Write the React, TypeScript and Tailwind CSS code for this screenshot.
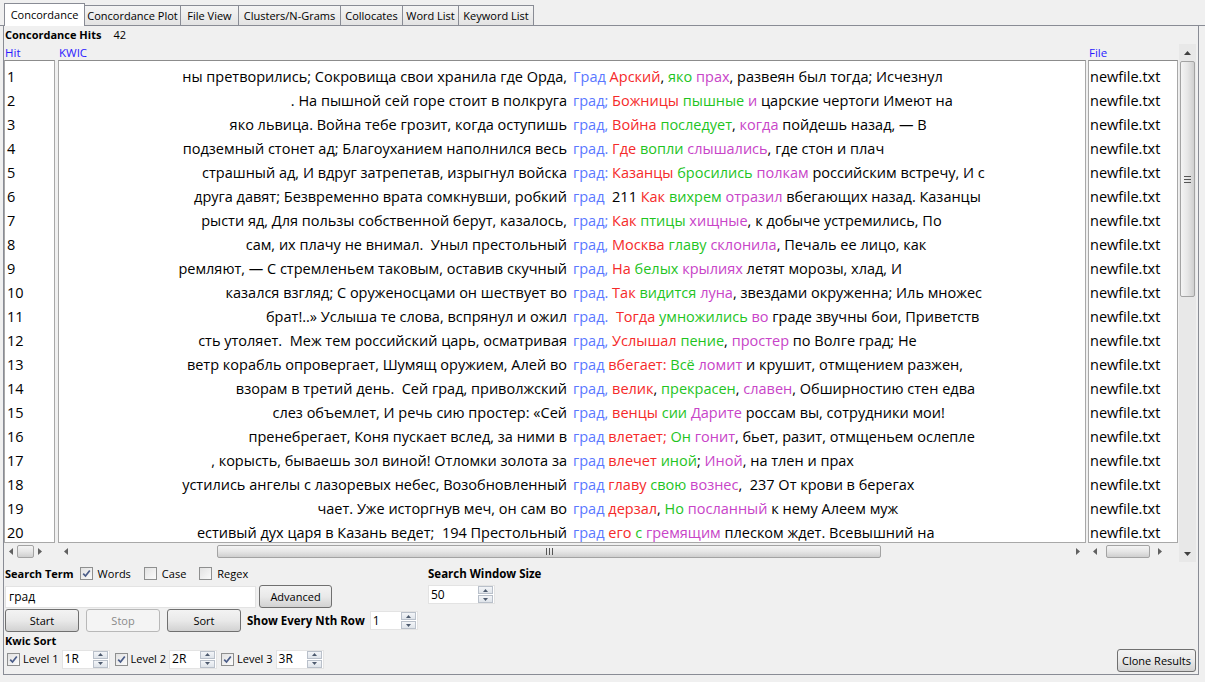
import React from "react";

type Row = { left: string; key: string; right: string };

const rows: Row[] = [
  { left: "ны претворились; Сокровища свои хранила где Орда,", key: "Град", right: " {r:Арский}, {g:яко} {m:прах}, развеян был тогда; Исчезнул" },
  { left: ". На пышной сей горе стоит в полкруга", key: "град;", right: " {r:Божницы} {g:пышные} {m:и} царские чертоги Имеют на" },
  { left: "яко львица. Война тебе грозит, когда оступишь", key: "град,", right: " {r:Война} {g:последует}, {m:когда} пойдешь назад, — В" },
  { left: "подземный стонет ад; Благоуханием наполнился весь", key: "град.", right: " {r:Где} {g:вопли} {m:слышались}, где стон и плач" },
  { left: "страшный ад, И вдруг затрепетав, изрыгнул войска", key: "град:", right: " {r:Казанцы} {g:бросились} {m:полкам} российским встречу, И с" },
  { left: "друга давят; Безвременно врата сомкнувши, робкий", key: "град", right: "  211 {r:Как} {g:вихрем} {m:отразил} вбегающих назад. Казанцы" },
  { left: "рысти яд, Для пользы собственной берут, казалось,", key: "град;", right: " {r:Как} {g:птицы} {m:хищные}, к добыче устремились, По" },
  { left: "сам, их плачу не внимал.  Уныл престольный", key: "град,", right: " {r:Москва} {g:главу} {m:склонила}, Печаль ее лицо, как" },
  { left: "ремляют, — С стремленьем таковым, оставив скучный", key: "град,", right: " {r:На} {g:белых} {m:крылиях} летят морозы, хлад, И" },
  { left: "казался взгляд; С оруженосцами он шествует во", key: "град.", right: " {r:Так} {g:видится} {m:луна}, звездами окруженна; Иль множес" },
  { left: "брат!..» Услыша те слова, вспрянул и ожил", key: "град.", right: "  {r:Тогда} {g:умножились} {m:во} граде звучны бои, Приветств" },
  { left: "сть утоляет.  Меж тем российский царь, осматривая", key: "град,", right: " {r:Услышал} {g:пение}, {m:простер} по Волге град; Не" },
  { left: "ветр корабль опровергает, Шумящ оружием, Алей во", key: "град", right: " {r:вбегает:} {g:Всё} {m:ломит} и крушит, отмщением разжен," },
  { left: "взорам в третий день.  Сей град, приволжский", key: "град,", right: " {r:велик}, {g:прекрасен}, {m:славен}, Обширностию стен едва" },
  { left: "слез объемлет, И речь сию простер: «Сей", key: "град,", right: " {r:венцы} {g:сии} {m:Дарите} россам вы, сотрудники мои!" },
  { left: "пренебрегает, Коня пускает вслед, за ними в", key: "град", right: " {r:влетает;} {g:Он} {m:гонит}, бьет, разит, отмщеньем ослепле" },
  { left: ", корысть, бываешь зол виной! Отломки золота за", key: "град", right: " {r:влечет} {g:иной}; {m:Иной}, на тлен и прах" },
  { left: "устились ангелы с лазоревых небес, Возобновленный", key: "град", right: " {r:главу} {g:свою} {m:вознес},  237 От крови в берегах" },
  { left: "чает. Уже исторгнув меч, он сам во", key: "град", right: " {r:дерзал}, {g:Но} {m:посланный} к нему Алеем муж" },
  { left: "естивый дух царя в Казань ведет;  194 Престольный", key: "град", right: " {r:его} {g:с} {m:гремящим} плеском ждет. Всевышний на" },
];

const colorClass: Record<string, string> = {
  r: "text-[#f52a2a]",
  g: "text-[#1fc41f]",
  m: "text-[#c844c8]",
};

function Rich({ text }: { text: string }) {
  const parts: React.ReactNode[] = [];
  const re = /\{(r|g|m):([^}]*)\}/g;
  let last = 0;
  let m: RegExpExecArray | null;
  let i = 0;
  while ((m = re.exec(text))) {
    if (m.index > last) parts.push(<span key={i++}>{text.slice(last, m.index)}</span>);
    parts.push(
      <span key={i++} className={colorClass[m[1]]}>
        {m[2]}
      </span>
    );
    last = m.index + m[0].length;
  }
  if (last < text.length) parts.push(<span key={i++}>{text.slice(last)}</span>);
  return <>{parts}</>;
}

const tabs = [
  { label: "Concordance", w: "w-[81px]", active: true },
  { label: "Concordance Plot", w: "w-[97px]" },
  { label: "File View", w: "w-[59px]" },
  { label: "Clusters/N-Grams", w: "w-[103px]" },
  { label: "Collocates", w: "w-[63px]" },
  { label: "Word List", w: "w-[57px]" },
  { label: "Keyword List", w: "w-[76px]" },
];

function Check({ checked = true }: { checked?: boolean }) {
  return (
    <span className="w-[13px] h-[13px] border border-[#8e8f8f] bg-gradient-to-br from-[#e2e2e2] to-[#fbfbfb] flex items-center justify-center shrink-0">
      {checked && (
        <svg width="9" height="9" viewBox="0 0 9 9">
          <path d="M1.2 4.6 L3.5 7 L7.8 1.4" stroke="#4a5c88" strokeWidth="1.7" fill="none" />
        </svg>
      )}
    </span>
  );
}

function SpinBtns() {
  return (
    <span className="flex flex-col gap-[1px] mr-[1px]">
      <span className="w-[15px] h-[8px] border border-[#b9c0ca] bg-gradient-to-b from-[#f3f5f8] to-[#dfe4ea] flex items-center justify-center">
        <svg width="5" height="3" viewBox="0 0 5 3"><path d="M0 3 L2.5 0 L5 3 Z" fill="#4d5a6e" /></svg>
      </span>
      <span className="w-[15px] h-[8px] border border-[#b9c0ca] bg-gradient-to-b from-[#f3f5f8] to-[#dfe4ea] flex items-center justify-center">
        <svg width="5" height="3" viewBox="0 0 5 3"><path d="M0 0 L2.5 3 L5 0 Z" fill="#4d5a6e" /></svg>
      </span>
    </span>
  );
}

function Btn({ children, w, disabled = false }: { children: React.ReactNode; w: string; disabled?: boolean }) {
  return (
    <span
      className={
        disabled
          ? `${w} h-[23px] border border-[#b8b8b8] rounded-[3px] bg-[#f4f4f4] text-[#8a8a8a] flex items-center justify-center`
          : `${w} h-[23px] border border-[#707070] rounded-[3px] bg-gradient-to-b from-[#f3f3f3] via-[#e9e9e9] to-[#d2d2d2] text-black flex items-center justify-center`
      }
    >
      {children}
    </span>
  );
}

function ArrowL() {
  return <svg width="4" height="7" viewBox="0 0 4 7"><path d="M4 0 L0 3.5 L4 7 Z" fill="#606060" /></svg>;
}
function ArrowR() {
  return <svg width="4" height="7" viewBox="0 0 4 7"><path d="M0 0 L4 3.5 L0 7 Z" fill="#606060" /></svg>;
}

function HThumb({ w }: { w: string }) {
  return (
    <span className={`${w} h-[13px] border border-[#a3a3a3] rounded-[2px] bg-gradient-to-b from-[#f4f4f4] via-[#e6e6e6] to-[#cfcfcf] shrink-0 flex items-center justify-center`} />
  );
}

export default function App() {
  return (
    <div className="w-[1205px] h-[682px] bg-[#f0f0f0] overflow-hidden font-['Open_Sans',sans-serif] text-[11px] text-black leading-[16px]">
      {/* Tabs */}
      <div className="h-[26px] flex items-end pl-[4px] border-b border-[#898c95]">
        {tabs.map((t) =>
          t.active ? (
            <div key={t.label} className={`${t.w} h-[23px] -mb-px bg-white border border-b-0 border-[#898c95] flex items-center justify-center relative z-10 whitespace-nowrap`}>
              {t.label}
            </div>
          ) : (
            <div key={t.label} className={`${t.w} h-[20px] -ml-px bg-gradient-to-b from-[#f5f5f5] to-[#e3e3e3] border border-b-0 border-[#898c95] flex items-center justify-center whitespace-nowrap`}>
              {t.label}
            </div>
          )
        )}
      </div>

      {/* Panel */}
      <div className="ml-[3px] w-[1196px] h-[649px] border-l border-r border-b border-[#898c95] flex flex-col">
        <div className="h-[18px] flex items-center pl-[1px] gap-[12px]">
          <span className="font-bold">Concordance Hits</span>
          <span>42</span>
        </div>

        {/* table */}
        <div className="h-[518px] flex">
          {/* Hit col */}
          <div className="w-[51px] flex flex-col">
            <div className="h-[16px] flex items-center pl-[1px] pt-[1px] text-[#2b1bff] text-[11.5px]">Hit</div>
            <div className="h-[483px] bg-white border border-[#a8a8a8] border-t-[#8c8c8c] overflow-hidden pt-[4px] text-[14.5px] leading-[22px]">
              {rows.map((_, i) => (
                <div key={i} className="h-[24px] flex items-center pl-[2px]">{i + 1}</div>
              ))}
            </div>
            <div className="h-[17px] flex items-center gap-[4px] pl-[5px]">
              <ArrowL />
              <HThumb w="w-[17px]" />
              <ArrowR />
            </div>
          </div>

          {/* KWIC col */}
          <div className="w-[1028px] ml-[3px] flex flex-col">
            <div className="h-[16px] flex items-center pl-[1px] pt-[1px] text-[#2b1bff] text-[11.5px]">KWIC</div>
            <div className="h-[483px] bg-white border border-[#a8a8a8] border-t-[#8c8c8c] overflow-hidden pt-[4px] text-[14.5px] leading-[22px]">
              {rows.map((r, i) => (
                <div key={i} className="h-[24px] flex items-center whitespace-pre">
                  <div className="w-[508px] shrink-0 flex justify-end overflow-hidden">
                    <span className="shrink-0">{r.left}</span>
                  </div>
                  <div className="flex-1 overflow-hidden pl-[6px]">
                    <span className="text-[#5a78ff]">{r.key}</span>
                    <Rich text={r.right} />
                  </div>
                </div>
              ))}
            </div>
            <div className="h-[17px] flex items-center pl-[6px] pr-[6px]">
              <ArrowL />
              <span className="w-[149px]" />
              <span className="w-[664px] h-[13px] border border-[#a3a3a3] rounded-[2px] bg-gradient-to-b from-[#f4f4f4] via-[#e6e6e6] to-[#cfcfcf] flex items-center justify-center">
                <svg width="7" height="7" viewBox="0 0 7 7"><path d="M0.5 0 V7 M3.5 0 V7 M6.5 0 V7" stroke="#555" strokeWidth="1" /></svg>
              </span>
              <span className="flex-1" />
              <ArrowR />
            </div>
          </div>

          {/* File col */}
          <div className="w-[90px] ml-[2px] flex flex-col">
            <div className="h-[16px] flex items-center pl-[1px] pt-[1px] text-[#2b1bff] text-[11.5px]">File</div>
            <div className="h-[483px] bg-white border border-[#a8a8a8] border-t-[#8c8c8c] overflow-hidden pt-[4px] text-[14.5px] leading-[22px]">
              {rows.map((_, i) => (
                <div key={i} className="h-[24px] flex items-center pl-[1px]">newfile.txt</div>
              ))}
            </div>
            <div className="h-[17px] flex items-center pl-[5px] pr-[16px]">
              <ArrowL />
              <span className="w-[9px]" />
              <HThumb w="w-[44px]" />
              <span className="flex-1" />
              <ArrowR />
            </div>
          </div>

          {/* vertical scrollbar */}
          <div className="w-[17px] ml-[1px] bg-[#e8e8e8] flex flex-col items-center">
            <div className="h-[17px] flex items-center justify-center">
              <svg width="7" height="4" viewBox="0 0 7 4"><path d="M0 4 L3.5 0 L7 4 Z" fill="#404040" /></svg>
            </div>
            <div className="w-[15px] h-[236px] border border-[#a3a3a3] rounded-[2px] bg-gradient-to-r from-[#f4f4f4] via-[#e6e6e6] to-[#cfcfcf] flex items-center justify-center">
              <svg width="7" height="7" viewBox="0 0 7 7"><path d="M0 0.5 H7 M0 3.5 H7 M0 6.5 H7" stroke="#555" strokeWidth="1" /></svg>
            </div>
            <div className="flex-1" />
            <div className="h-[17px] flex items-center justify-center">
              <svg width="7" height="4" viewBox="0 0 7 4"><path d="M0 0 L3.5 4 L7 0 Z" fill="#404040" /></svg>
            </div>
          </div>
        </div>

        {/* bottom controls */}
        <div className="flex-1 flex pl-[1px] pt-[3px]">
          <div className="w-[423px] flex flex-col">
            <div className="h-[17px] flex items-center">
              <span className="font-bold mr-[6px]">Search Term</span>
              <Check />
              <span className="ml-[5px] mr-[13px]">Words</span>
              <Check checked={false} />
              <span className="ml-[5px] mr-[13px]">Case</span>
              <Check checked={false} />
              <span className="ml-[5px]">Regex</span>
            </div>
            <div className="h-[23px] mt-[3px] flex items-center">
              <span className="w-[251px] h-[22px] bg-white border border-[#e3e3e3] flex items-center pl-[3px] text-[12px]">град</span>
              <span className="ml-[3px]"><Btn w="w-[73px]">Advanced</Btn></span>
            </div>
            <div className="h-[23px] mt-[1px] flex items-center">
              <Btn w="w-[74px]">Start</Btn>
              <span className="ml-[7px]"><Btn w="w-[74px]" disabled>Stop</Btn></span>
              <span className="ml-[7px]"><Btn w="w-[74px]">Sort</Btn></span>
              <span className="ml-[6px] font-bold text-[11.5px]">Show Every Nth Row</span>
              <span className="ml-[5px] w-[48px] h-[19px] bg-white border border-[#e3e3e3] flex items-center justify-between pl-[2px]">
                <span className="text-[12px]">1</span>
                <SpinBtns />
              </span>
            </div>
            <div className="h-[17px] flex items-center font-bold">Kwic Sort</div>
            <div className="h-[20px] flex items-center pl-[2px]">
              <Check />
              <span className="ml-[3px]">Level 1</span>
              <span className="ml-[3px] w-[48px] h-[19px] bg-white border border-[#e3e3e3] flex items-center justify-between pl-[2px]">
                <span className="text-[12px]">1R</span>
                <SpinBtns />
              </span>
              <span className="ml-[5px]"><Check /></span>
              <span className="ml-[3px]">Level 2</span>
              <span className="ml-[3px] w-[48px] h-[19px] bg-white border border-[#e3e3e3] flex items-center justify-between pl-[2px]">
                <span className="text-[12px]">2R</span>
                <SpinBtns />
              </span>
              <span className="ml-[4px]"><Check /></span>
              <span className="ml-[3px]">Level 3</span>
              <span className="ml-[3px] w-[48px] h-[19px] bg-white border border-[#e3e3e3] flex items-center justify-between pl-[2px]">
                <span className="text-[12px]">3R</span>
                <SpinBtns />
              </span>
            </div>
          </div>

          <div className="flex flex-col">
            <div className="h-[17px] flex items-center font-bold text-[11.5px]">Search Window Size</div>
            <span className="mt-[3px] w-[67px] h-[19px] bg-white border border-[#e3e3e3] flex items-center justify-between pl-[2px]">
              <span className="text-[12px]">50</span>
              <SpinBtns />
            </span>
          </div>

          <div className="flex-1" />
          <div className="flex flex-col justify-end pb-[2px] pr-[2px]">
            <span className="w-[79px] h-[23px] border border-[#707070] rounded-[3px] bg-gradient-to-b from-[#f3f3f3] via-[#e9e9e9] to-[#d2d2d2] flex items-center justify-center">
              Clone Results
            </span>
          </div>
        </div>
      </div>
    </div>
  );
}
